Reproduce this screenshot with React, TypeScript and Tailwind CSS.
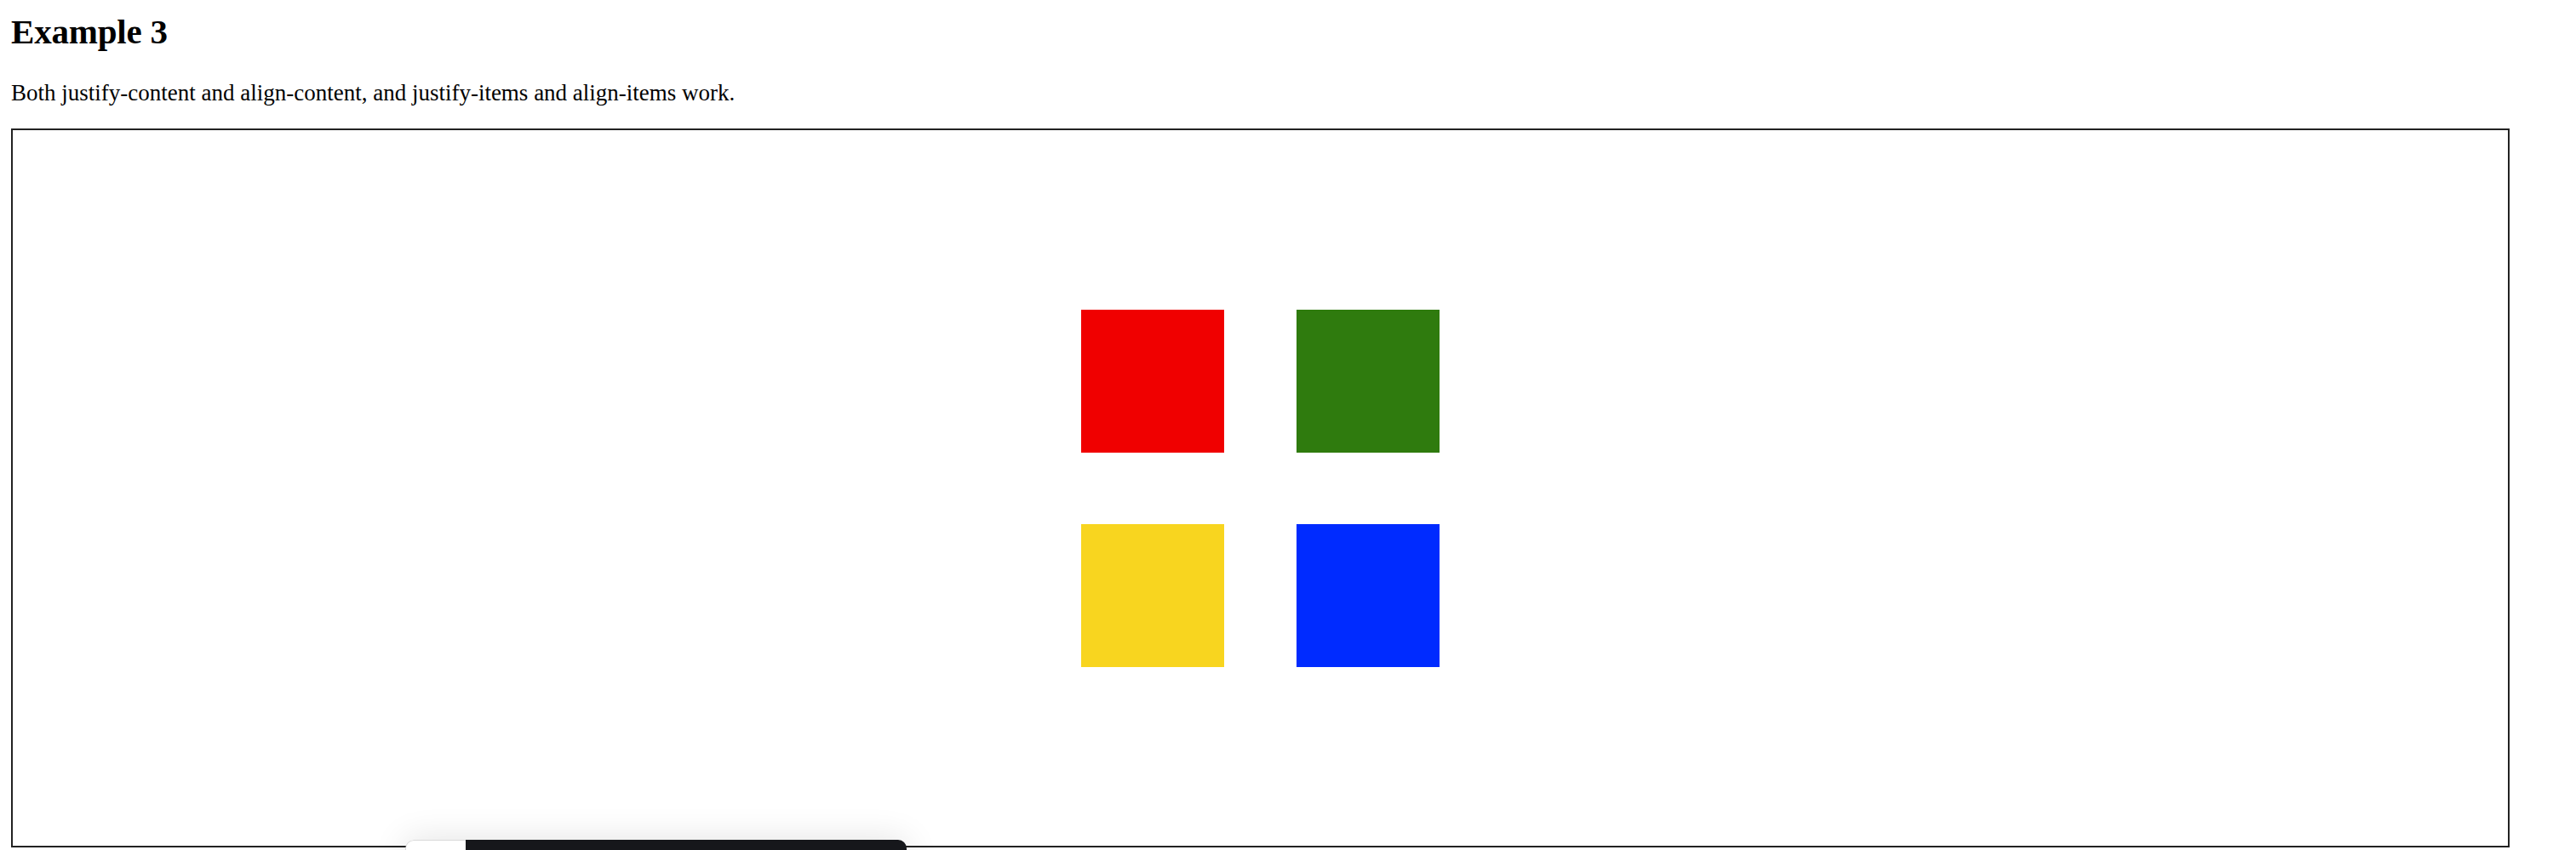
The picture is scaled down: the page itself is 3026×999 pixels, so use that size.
import React from 'react';

const squares = [
    { id: 'red', color: 'bg-[#f00000]' },
    { id: 'green', color: 'bg-[#2f7b0e]' },
    { id: 'yellow', color: 'bg-[#f8d51f]' },
    { id: 'blue', color: 'bg-[#002bff]' },
];

const App: React.FC = () => {
    return (
        <div className="relative min-h-[999px] bg-white text-black font-['Liberation_Serif','Times_New_Roman',serif]">
            <div className="pl-[13px]">
                <h2 className="pt-[13px] text-[41px] leading-[48px] font-bold tracking-[-0.2px]">Example 3</h2>
                <p className="mt-[32px] text-[27px] leading-[32px]">
                    Both justify-content and align-content, and justify-items and align-items work.
                </p>
                <div className="mt-[26px] w-[2935px] h-[845px] border-2 border-[#222] grid grid-cols-[168px_168px] grid-rows-[168px_168px] gap-x-[85px] gap-y-[84px] content-center justify-center">
                    {squares.map(sq => (
                        <div key={sq.id} className={`w-[168px] h-[168px] ${sq.color}`} />
                    ))}
                </div>
            </div>

            {/* floating toolbar peeking in from the bottom edge */}
            <div className="absolute left-[476px] top-[987px] w-[589px] h-[40px] flex rounded-t-[10px] overflow-hidden shadow-[0_0_40px_rgba(0,0,0,0.12)]">
                <div className="w-[71px] bg-white border-l border-t border-[#d9d9d9] rounded-tl-[10px]" />
                <div className="flex-1 bg-[#16171b]" />
            </div>
        </div>
    );
};

export default App;
